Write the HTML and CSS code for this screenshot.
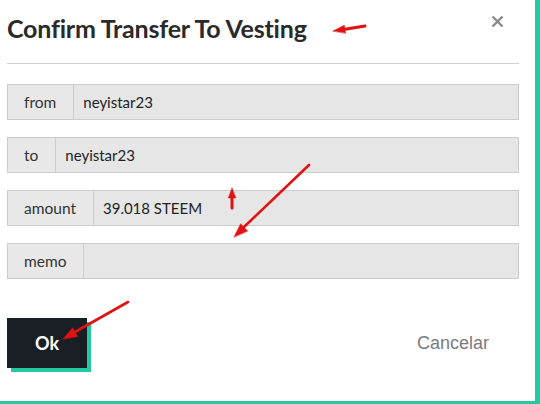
FILE: index.html
```html
<!DOCTYPE html>
<html>
<head>
<meta charset="utf-8">
<link rel="stylesheet" href="styles.css">
</head>
<body>
<div class="modal">
  <div class="header">
    <h1 class="title">Confirm Transfer To Vesting</h1>
    <button class="close" aria-label="close">
      <svg width="13" height="13" viewBox="0 0 13 13"><path d="M1.5 1.5L11.5 11.5M11.5 1.5L1.5 11.5" stroke="#8a8a8a" stroke-width="2.4" stroke-linecap="butt"/></svg>
    </button>
  </div>
  <hr class="divider">
  <div class="fields">
    <div class="group"><span class="addon">from</span><span class="value">neyistar23</span></div>
    <div class="group"><span class="addon">to</span><span class="value">neyistar23</span></div>
    <div class="group"><span class="addon">amount</span><span class="value">39.018 STEEM</span></div>
    <div class="group"><span class="addon">memo</span><span class="value"></span></div>
  </div>
  <div class="footer">
    <button class="ok">Ok</button>
    <button class="cancel">Cancelar</button>
  </div>
  <svg class="annotations" width="540" height="404" viewBox="0 0 540 404">
    <g fill="#e01212" stroke="#e01212" stroke-linecap="round">
      <line x1="365" y1="26" x2="345" y2="29.2" stroke-width="3"/>
      <polygon points="333,31 344.3,25.2 345.5,33.1" stroke-width="0.5"/>
      <line x1="232" y1="197" x2="232" y2="208" stroke-width="3"/>
      <polygon points="232,188 228.3,198 235.7,198" stroke-width="0.5"/>
      <line x1="309" y1="165" x2="244" y2="227" stroke-width="2.6"/>
      <polygon points="234,237 240.6,223.7 247.6,230.9" stroke-width="0.5"/>
      <line x1="128" y1="302" x2="75" y2="332" stroke-width="2.6"/>
      <polygon points="63,339 72.7,327.8 77.7,336.4" stroke-width="0.5"/>
    </g>
  </svg>
</div>
</body>
</html>
```

FILE: styles.css
```css
* { box-sizing: border-box; }
html, body { margin: 0; padding: 0; background: #fff; }
body { width: 540px; height: 404px; overflow: hidden; font-family: Lato, "Open Sans", sans-serif; }

.modal {
  position: relative;
  width: 540px;
  height: 404px;
  background: #fff;
  border-right: 5px solid #22c9a3;
  border-bottom: 3px solid #22c9a3;
  padding: 0 16px 0 7px;
}

.header {
  display: flex;
  justify-content: space-between;
  align-items: flex-start;
}
.title {
  margin: 0;
  padding-top: 13px;
  font-size: 25px;
  line-height: 30px;
  font-weight: 700;
  color: #2a2a2a;
  letter-spacing: -0.2px;
}
.close {
  border: 0;
  background: none;
  padding: 0;
  margin: 15px 15px 0 0;
  width: 13px;
  height: 13px;
  display: flex;
}

.divider {
  margin: 20px 0 0 0;
  border: 0;
  border-top: 1px solid #cfcfcf;
  height: 0;
}

.fields {
  display: flex;
  flex-direction: column;
  gap: 17px;
  margin-top: 20px;
}
.group {
  display: flex;
  height: 36px;
  border: 1px solid #cccccc;
  background: #e6e6e6;
}
.addon {
  display: flex;
  align-items: center;
  padding: 0 17px 0 16px;
  border-right: 1px solid #cccccc;
  background: #e8e8e8;
  color: #333;
  font-size: 15.5px;
}
.value {
  flex: 1;
  display: flex;
  align-items: center;
  padding-left: 9px;
  color: #222;
  font-size: 15px;
}

.footer {
  display: flex;
  justify-content: space-between;
  align-items: center;
  margin-top: 39px;
}
.ok {
  width: 80px;
  height: 50px;
  border: 0;
  background: #1a1f26;
  color: #fff;
  font-family: Lato, sans-serif;
  font-weight: 700;
  font-size: 18px;
  box-shadow: 4px 4px 0 #22c9a3;
  padding: 0;
}
.cancel {
  border: 0;
  background: none;
  color: #777b80;
  font-family: "Liberation Sans", Arial, sans-serif;
  font-size: 18px;
  padding: 0 30px 0 0;
}

.annotations {
  position: absolute;
  left: 0;
  top: 0;
  pointer-events: none;
}
```
